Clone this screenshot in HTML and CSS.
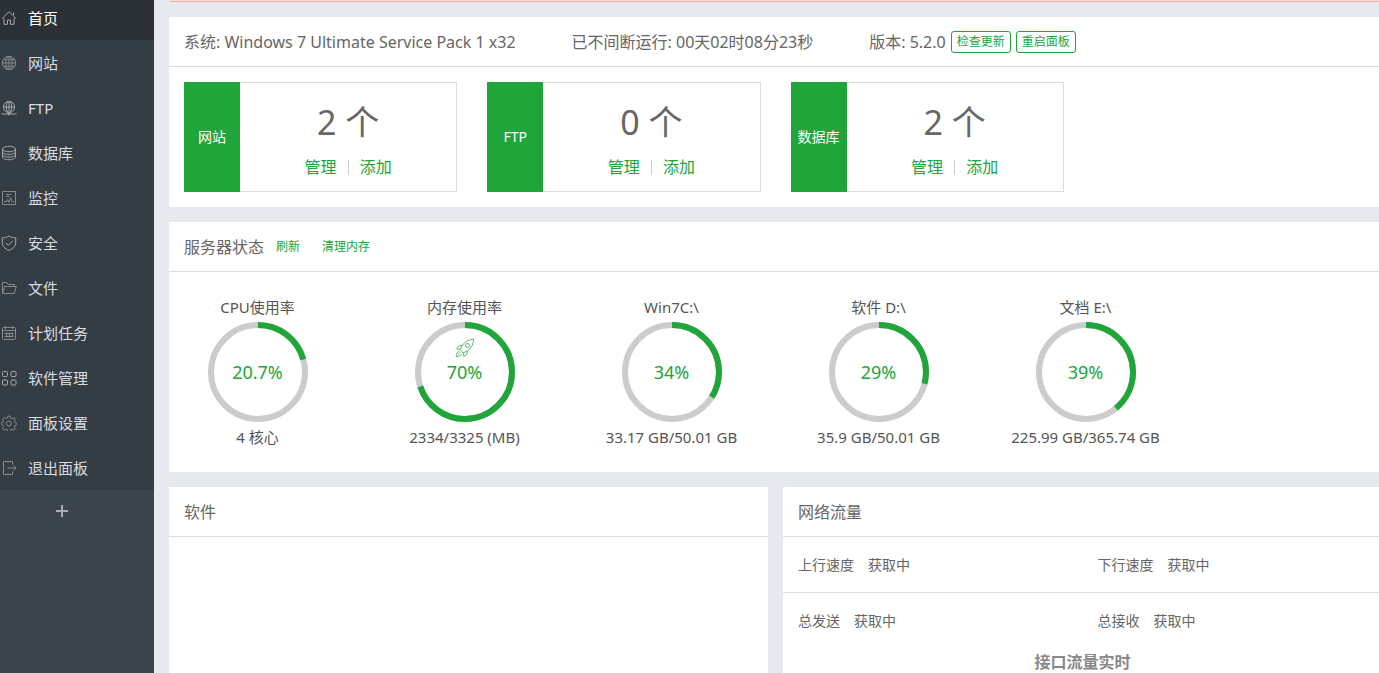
FILE: index.html
```html
<!DOCTYPE html>
<html lang="zh-CN">
<head>
<meta charset="utf-8">
<title>首页</title>
<link rel="stylesheet" href="styles.css">
</head>
<body>
<nav class="sidebar">
  <ul class="menu">
    <li><a class="active" href="#"><svg viewBox="0 0 16 16"><path d="M1 8.5 8 1.8l7 6.7M3 8v6.3h3.5V10h3v4.3H13V8M12.5 5V2.5"/></svg>首页</a></li>
    <li><a href="#"><svg viewBox="0 0 16 16"><circle cx="8" cy="8" r="6.7"/><ellipse cx="8" cy="8" rx="3.2" ry="6.7"/><path d="M8 1.3v13.4M1.3 8h13.4M2.3 4.7h11.4M2.3 11.3h11.4"/></svg>网站</a></li>
    <li><a href="#"><svg class="strong" viewBox="0 0 16 16"><circle cx="8" cy="7" r="5.6"/><ellipse cx="8" cy="7" rx="2.7" ry="5.6"/><path d="M8 1.4v12M2.4 7h11.2M.5 14h15"/><circle cx="8" cy="14" r="1"/></svg>FTP</a></li>
    <li><a href="#"><svg class="strong" viewBox="0 0 16 16"><ellipse cx="8" cy="4" rx="6.5" ry="2.7"/><path d="M1.5 4v8c0 1.5 2.9 2.7 6.5 2.7s6.5-1.2 6.5-2.7V4M1.5 6.8C1.5 8.2 4.4 9.4 8 9.4s6.5-1.2 6.5-2.6M1.5 9.5c0 1.4 2.9 2.6 6.5 2.6s6.5-1.2 6.5-2.6"/></svg>数据库</a></li>
    <li><a href="#"><svg viewBox="0 0 16 16"><path d="M1.5 1.5h13v13h-13zM5 4.500h5M5 6.500h3M3 11.500h2.500l1-2 1.500 3 1.500-5 1.500 4h2"/></svg>监控</a></li>
    <li><a href="#"><svg class="strong" viewBox="0 0 16 16"><path d="M8 .8c2 1.500 4.200 2 6.700 2v5c0 3.500-2.700 6-6.700 7.600C4 13.800 1.300 11.300 1.300 7.800v-5C3.800 2.800 6 2.300 8 .8zM4.800 7.800l2.500 2.500 4.500-4.500"/></svg>安全</a></li>
    <li><a href="#"><svg viewBox="0 0 16 16"><path d="M1.500 13.500v-11h4.300l1.400 2h6.300v2M1.500 13.500l2.300-7h11.500l-2 7z"/></svg>文件</a></li>
    <li><a href="#"><svg viewBox="0 0 16 16"><rect x="1.500" y="2.500" width="13" height="12" rx="1"/><path d="M1.500 5.500h13M4.500 1v3M11.500 1v3M3.500 8.500h9M3.500 11.500h9M5.500 7.500v5M8.500 7.500v5M11.500 7.500v5"/></svg>计划任务</a></li>
    <li><a href="#"><svg class="strong" viewBox="0 0 16 16"><rect x="1.500" y="1.500" width="5" height="5" rx="1"/><rect x="10" y="1.500" width="5" height="5" rx="1"/><rect x="1.500" y="10" width="5" height="5" rx="1"/><rect x="10" y="10" width="5" height="5" rx="1"/></svg>软件管理</a></li>
    <li><a href="#"><svg viewBox="0 0 16 16"><path d="M6.800 1.200h2.400l.5 2 1.300.6 1.900-1 1.500 1.600-1 1.900.5 1.200 1.400.5v1.800l-1.400.8-.5 1.200.8 1.800-1.600 1.600-1.800-1-1.200.6-.5 1.800H6.800l-.5-1.900-1.300-.6-1.900 1-1.600-1.600 1-1.900-.5-1.200-1.300-.5V7.600L2 7.100l.5-1.300-1-1.800 1.600-1.500 1.900 1 1.300-.6z"/><circle cx="8" cy="8.500" r="2.500"/></svg>面板设置</a></li>
    <li><a href="#"><svg viewBox="0 0 16 16"><path d="M11.500 4.500v-3h-9v13h9v-3M6.500 8H15M12.500 5.500 15 8l-2.500 2.500"/></svg>退出面板</a></li>
  </ul>
  <button class="add" type="button" aria-label="添加"><svg viewBox="0 0 14 14"><path d="M7 1v12M1 7h12"/></svg></button>
</nav>

<main class="main">
  <div class="content">
    <div class="alert"></div>

    <section class="panel">
      <header class="head info">
        <span>系统: Windows 7 Ultimate Service Pack 1 x32</span>
        <span>已不间断运行: 00天02时08分23秒</span>
        <div class="version"><span>版本: 5.2.0</span><button type="button">检查更新</button><button type="button">重启面板</button></div>
      </header>
      <div class="counts">
        <article class="count"><h3>网站</h3><div class="count-body"><p>2 个</p><div class="actions"><a href="#">管理</a><i></i><a href="#">添加</a></div></div></article>
        <article class="count"><h3>FTP</h3><div class="count-body"><p>0 个</p><div class="actions"><a href="#">管理</a><i></i><a href="#">添加</a></div></div></article>
        <article class="count"><h3>数据库</h3><div class="count-body"><p>2 个</p><div class="actions"><a href="#">管理</a><i></i><a href="#">添加</a></div></div></article>
      </div>
    </section>

    <section class="panel">
      <header class="head status"><h2>服务器状态</h2><a href="#">刷新</a><a href="#">清理内存</a></header>
      <div class="gauges">
        <div class="gauge"><span>CPU使用率</span><div class="ring"><svg viewBox="0 0 100 100"><circle cx="50" cy="50" r="47"/><circle class="value" cx="50" cy="50" r="47" pathLength="100" stroke-dasharray="20.7 100"/></svg><b>20.7%</b></div><span>4 核心</span></div>
        <div class="gauge"><span>内存使用率</span><div class="ring"><svg viewBox="0 0 100 100"><circle cx="50" cy="50" r="47"/><circle class="value" cx="50" cy="50" r="47" pathLength="100" stroke-dasharray="70 100"/></svg><b>70%</b>
          <svg class="rocket" viewBox="0 0 20 20"><path d="M18.700 1.200c-5 .3-8.700 2.300-11.500 6.300L5 11.800l3.200 3.200 4.300-2.300c4-2.800 5.900-6.500 6.200-11.500zM7.500 7.300l-3.500.5L1.500 11l3.800.3M12.500 12.600l-.5 3.500L8.800 18.600l-.3-3.800M4.200 13c-1.700.8-2.600 2.600-3 5.700 3-.4 5-1.300 5.700-3M5 14.200l-1.500 2.300"/><circle cx="12.500" cy="7.500" r="2"/></svg></div><span>2334/3325 (MB)</span></div>
        <div class="gauge"><span>Win7C:\</span><div class="ring"><svg viewBox="0 0 100 100"><circle cx="50" cy="50" r="47"/><circle class="value" cx="50" cy="50" r="47" pathLength="100" stroke-dasharray="34 100"/></svg><b>34%</b></div><span>33.17 GB/50.01 GB</span></div>
        <div class="gauge"><span>软件 D:\</span><div class="ring"><svg viewBox="0 0 100 100"><circle cx="50" cy="50" r="47"/><circle class="value" cx="50" cy="50" r="47" pathLength="100" stroke-dasharray="29 100"/></svg><b>29%</b></div><span>35.9 GB/50.01 GB</span></div>
        <div class="gauge"><span>文档 E:\</span><div class="ring"><svg viewBox="0 0 100 100"><circle cx="50" cy="50" r="47"/><circle class="value" cx="50" cy="50" r="47" pathLength="100" stroke-dasharray="39 100"/></svg><b>39%</b></div><span>225.99 GB/365.74 GB</span></div>
      </div>
    </section>

    <div class="bottom">
      <section class="panel"><header class="head"><h2>软件</h2></header></section>
      <section class="panel">
        <header class="head"><h2>网络流量</h2></header>
        <div class="traffic"><p><span>上行速度</span><span>获取中</span></p><p><span>下行速度</span><span>获取中</span></p></div>
        <div class="traffic"><p><span>总发送</span><span>获取中</span></p><p><span>总接收</span><span>获取中</span></p></div>
        <h4 class="chart-title">接口流量实时</h4>
      </section>
    </div>
  </div>
</main>
</body>
</html>
```
FILE: styles.css
```css
* { box-sizing: border-box; margin: 0; padding: 0; }
body {
  display: flex;
  height: 100vh;
  overflow: hidden;
  background: #e6e9ee;
  color: #666;
  font: 16px/24px "Noto Sans", "Noto Sans CJK SC", sans-serif;
}
a { color: #20a53a; text-decoration: none; }
h2, h3 { font-weight: 400; }
h2 { font-size: 16px; }
button { font-family: inherit; cursor: pointer; }

.sidebar { flex: 0 0 154px; background: #3c444d; }
/* the list is scrolled up slightly under the window edge */
.menu { margin-top: -5px; list-style: none; background: #353d44; }
.menu a {
  display: flex;
  align-items: center;
  gap: 11px;
  height: 45px;
  padding-left: 1px;
  color: #d8dce0;
  font-size: 15px;
}
.menu a.active { background: #2c3138; color: #fff; }
.menu svg { width: 16px; height: 16px; fill: none; stroke: #838a90; stroke-width: 1; }
.menu .active svg, .menu svg.strong { stroke: #a2a7ac; }
.add {
  display: flex;
  justify-content: center;
  align-items: center;
  width: 124px;
  height: 42px;
  border: 0;
  background: none;
}
.add svg { width: 14px; height: 14px; stroke: #a9aeb3; stroke-width: 2; }

.main { flex: 1; min-width: 0; overflow: hidden; padding-left: 15px; }
.content { display: flex; flex-direction: column; gap: 15px; height: 100%; margin-right: -3px; }
.alert { flex: none; height: 2px; background: #ffdede; border-bottom: 1px solid #f3a9b0; border-radius: 0 0 0 2px; }
.panel { background: #fff; }
.head {
  display: flex;
  align-items: center;
  height: 50px;
  padding: 0 15px;
  border-bottom: 1px solid #ddd;
}

.info { gap: 56px; }
.version { display: flex; align-items: center; gap: 5px; }
.version button {
  height: 22px;
  padding: 0 5px;
  border: 1px solid #20a53a;
  border-radius: 3px;
  background: #fff;
  color: #20a53a;
  font-size: 12px;
  line-height: 20px;
}

.counts { display: grid; grid-template-columns: repeat(4, 1fr); gap: 30px; padding: 15px; }
.count { display: flex; height: 110px; border: 1px solid #ddd; border-left: 0; }
.count h3 {
  display: flex;
  flex: 0 0 56px;
  justify-content: center;
  align-items: center;
  margin: -1px 0;
  background: #20a53a;
  color: #fff;
  font-size: 14px;
}
.count-body { flex: 1; padding-top: 14px; text-align: center; }
.count-body p { font-size: 34px; line-height: 50px; }
.actions { display: flex; justify-content: center; align-items: center; gap: 11px; padding-top: 8px; }
.actions i { width: 1px; height: 15px; background: #ccc; }

.status a { margin-left: 12px; font-size: 12px; }
.status a + a { margin-left: 22px; }
.gauges { display: flex; gap: 30px; padding: 23px 0; }
.gauge { display: flex; flex-direction: column; align-items: center; gap: 3px; width: 177px; color: #555; font-size: 15px; white-space: nowrap; }
.ring { position: relative; display: grid; place-items: center; width: 100px; height: 100px; }
.ring > * { grid-area: 1 / 1; }
.ring circle { fill: none; stroke: #ccc; stroke-width: 6; }
.ring .value { stroke: #20a53a; transform: rotate(-90deg); transform-origin: center; }
.ring b { color: #20a53a; font-size: 18px; font-weight: 400; }
.ring .rocket { position: absolute; top: 16px; left: 40px; width: 20px; height: 20px; }
.rocket path, .ring .rocket circle { fill: none; stroke: #5cbb70; stroke-width: 1; }

.bottom { display: grid; flex: 1; grid-template-columns: 1fr 1fr; gap: 15px; min-height: 0; }
.traffic { display: grid; grid-template-columns: 1fr 1fr; height: 56px; font-size: 14px; border-bottom: 1px solid #ddd; }
.traffic p { display: flex; align-items: center; gap: 14px; padding-left: 15px; }
.traffic + .traffic { border-bottom: 0; }
.chart-title { color: #888; font-size: 16px; line-height: 26px; text-align: center; }
```
